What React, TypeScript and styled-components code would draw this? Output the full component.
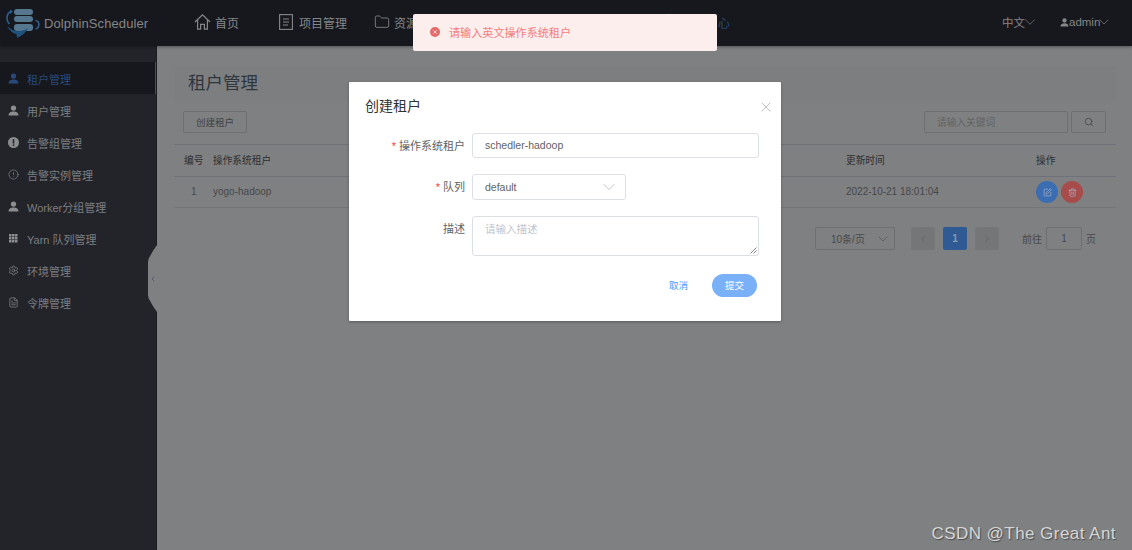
import React from 'react'
import styled, { createGlobalStyle } from 'styled-components'
import { ChevronDown, ChevronLeft, ChevronRight, Search, X, Folder, SquarePen, Trash2, CircleAlert, Settings, FileText } from 'lucide-react'

const GlobalStyle = createGlobalStyle`
  html, body {
    margin: 0;
    height: 100%;
    overflow: hidden;
    background: #7f8081;
    font-family: "Liberation Sans", "Noto Sans CJK SC", sans-serif;
  }
  * { box-sizing: border-box; }
`

const Page = styled.div`
  position: relative;
  width: 1132px;
  height: 550px;
  overflow: hidden;
  display: flex;
  flex-direction: column;
`

const Header = styled.header`
  flex: none;
  height: 46px;
  background: #17181e;
  color: #858687;
  display: flex;
  align-items: center;
  box-shadow: 0 1px 3px rgba(0, 0, 0, 0.35);
  z-index: 1;
`

const Brand = styled.div`
  flex: none;
  width: 194px;
  padding-left: 5px;
  display: flex;
  align-items: center;
  gap: 3px;
  font-size: 13px;
  letter-spacing: 0.1px;
  svg {
    flex: none;
  }
`

const Nav = styled.nav`
  display: flex;
  flex: 1;
  padding-bottom: 2px;
`

const NavItem = styled.div<{ $width: number; $active?: boolean }>`
  flex: none;
  width: ${(p) => p.$width}px;
  display: flex;
  align-items: center;
  gap: 4px;
  font-size: 12px;
  color: ${(p) => (p.$active ? '#284a78' : '#858687')};
`

const HeaderMenu = styled.div<{ $width: number }>`
  flex: none;
  width: ${(p) => p.$width}px;
  display: flex;
  align-items: center;
  font-size: 11.5px;
  padding-bottom: 2px;
`

const MenuChevron = styled(ChevronDown)`
  margin-left: -4px;
`

const Body = styled.div`
  flex: 1;
  display: flex;
  min-height: 0;
`

const Sidebar = styled.aside`
  position: relative;
  flex: none;
  width: 157px;
  padding-top: 16px;
  background: #22242a;
  border-right: 1px solid #1b1c20;
`

const SideItem = styled.div<{ $active?: boolean }>`
  height: 32px;
  padding: 1px 0 0 8px;
  display: flex;
  align-items: center;
  gap: 8px;
  font-size: 11px;
  color: ${(p) => (p.$active ? '#284a78' : '#7d7e80')};
  background: ${(p) => (p.$active ? '#17181e' : 'transparent')};
  border-right: 1px solid ${(p) => (p.$active ? '#2b5290' : 'transparent')};
  svg {
    flex: none;
    color: ${(p) => (p.$active ? '#284a78' : '#8c8d8f')};
  }
`

const CollapseHandle = styled.div`
  position: absolute;
  top: 199px;
  right: -1px;
  width: 9px;
  height: 67px;
  padding-left: 1px;
  background: #7f8081;
  clip-path: polygon(100% 0, 60% 8%, 8% 20%, 0 25%, 0 75%, 8% 80%, 60% 92%, 100% 100%);
  display: flex;
  align-items: center;
  color: #4a5470;
`

const Main = styled.main`
  flex: 1;
  min-width: 0;
  padding: 20px 16px 0 17px;
  background: #7f8081;
`

const TitleBar = styled.div`
  height: 34px;
  padding: 0 0 3px 14px;
  display: flex;
  align-items: center;
  font-size: 17.5px;
  color: #30363d;
  background: #7c7e80;
`

const Toolbar = styled.div`
  margin-top: 11px;
  padding: 0 10px 0 9px;
  height: 22px;
  display: flex;
  align-items: center;
  gap: 3px;
`

const GhostButton = styled.div`
  width: 64px;
  height: 22px;
  border: 1px solid #6d6f72;
  border-radius: 2px;
  display: flex;
  align-items: center;
  justify-content: center;
  font-size: 9.5px;
  color: #3f4144;
  margin-right: auto;
`

const SearchInput = styled.div`
  width: 144px;
  height: 22px;
  padding-left: 12px;
  border: 1px solid #6d6f72;
  border-radius: 2px;
  display: flex;
  align-items: center;
  font-size: 9.7px;
  color: #626365;
`

const SearchButton = styled.div`
  width: 35px;
  height: 22px;
  border: 1px solid #6d6f72;
  border-radius: 2px;
  display: flex;
  align-items: center;
  justify-content: center;
  color: #47494c;
`

const TableWrap = styled.div`
  margin-top: 11px;
  font-size: 10px;
  color: #3a3c3f;
`

const TableRow = styled.div<{ $head?: boolean }>`
  height: 32px;
  padding-bottom: 2px;
  display: grid;
  grid-template-columns: 39px 633px 190px 1fr;
  align-items: center;
  border-top: 1px solid #6f7278;
  font-size: ${(p) => (p.$head ? '9.7px' : '10px')};
  color: ${(p) => (p.$head ? '#2c2e31' : '#46484b')};
  &:last-child {
    border-bottom: 1px solid #737578;
  }
`

const IndexCell = styled.div<{ $head?: boolean }>`
  padding-left: ${(p) => (p.$head ? '10px' : '17px')};
`

const Actions = styled.div`
  display: flex;
  gap: 3px;
  margin-top: 2px;
`

const RoundButton = styled.div<{ $color: string }>`
  width: 22px;
  height: 22px;
  border-radius: 50%;
  background: ${(p) => p.$color};
  display: flex;
  align-items: center;
  justify-content: center;
  color: #a3aebd;
`

const Pager = styled.div`
  margin-top: 19px;
  padding-right: 20px;
  height: 23px;
  display: flex;
  justify-content: flex-end;
  align-items: center;
  font-size: 10px;
  color: #47494c;
`

const PageSize = styled.div`
  width: 80px;
  height: 23px;
  margin-right: 16px;
  padding: 0 3px 0 15px;
  border: 1px solid #6d6f72;
  border-radius: 2px;
  display: flex;
  align-items: center;
  justify-content: space-between;
`

const PageBox = styled.div<{ $active?: boolean }>`
  width: 24px;
  height: 23px;
  margin-right: 8px;
  border-radius: 2px;
  display: flex;
  align-items: center;
  justify-content: center;
  font-weight: bold;
  background: ${(p) => (p.$active ? '#2f5a94' : '#747678')};
  color: ${(p) => (p.$active ? '#8d98a8' : '#5e6062')};
`

const JumpInput = styled.div`
  width: 36px;
  height: 23px;
  margin: 0 4px;
  border: 1px solid #6d6f72;
  border-radius: 2px;
  display: flex;
  align-items: center;
  justify-content: center;
`

const JumpLabel = styled.span<{ $left?: number }>`
  margin-left: ${(p) => p.$left ?? 0}px;
`

const Toast = styled.div`
  position: absolute;
  top: 14px;
  left: 413px;
  width: 304px;
  height: 37px;
  padding: 0 0 2px 17px;
  display: flex;
  align-items: center;
  gap: 9px;
  font-size: 11.1px;
  color: #f37d7d;
  background: #fdeeee;
  border-radius: 2px;
  z-index: 3;
`

const ToastIcon = styled.div`
  width: 10px;
  height: 10px;
  border-radius: 50%;
  background: #e56a6a;
  display: flex;
  align-items: center;
  justify-content: center;
  color: #fdeeee;
`

const Modal = styled.section`
  position: absolute;
  top: 82px;
  left: 349px;
  width: 432px;
  height: 239px;
  padding: 16px 22px 0 16px;
  background: #fff;
  border-radius: 1px;
  box-shadow: 0 1px 3px rgba(0, 0, 0, 0.3);
  z-index: 2;
`

const ModalHead = styled.div`
  height: 17px;
  margin: 0 -15px 18px 0;
  display: flex;
  align-items: center;
  justify-content: space-between;
  font-size: 14px;
  color: #303133;
`

const ModalTitle = styled.span`
  margin-top: -4px;
`

const FormRow = styled.div<{ $mb: number; $top?: boolean }>`
  display: flex;
  align-items: ${(p) => (p.$top ? 'flex-start' : 'center')};
  margin-bottom: ${(p) => p.$mb}px;
`

const Label = styled.label<{ $top?: boolean }>`
  width: 100px;
  margin-right: 7px;
  text-align: right;
  font-size: 11px;
  color: #606266;
  padding-top: ${(p) => (p.$top ? '4px' : '0')};
  padding-bottom: ${(p) => (p.$top ? '0' : '2px')};
`

const Required = styled.span`
  color: #f03c3c;
  margin-right: 3px;
`

const Field = styled.div<{ $width: number; $height: number; $muted?: boolean }>`
  position: relative;
  width: ${(p) => p.$width}px;
  height: ${(p) => p.$height}px;
  padding: 0 6px 1px 12px;
  border: 1px solid #dcdfe6;
  border-radius: 3px;
  display: flex;
  align-items: center;
  justify-content: space-between;
  font-size: 10.5px;
  color: ${(p) => (p.$muted ? '#c0c4cc' : '#606266')};
`

const TextArea = styled(Field)`
  align-items: flex-start;
  padding-top: 4px;
`

const ResizeGrip = styled.svg`
  position: absolute;
  right: 1px;
  bottom: 1px;
`

const ModalFooter = styled.div`
  display: flex;
  justify-content: flex-end;
  align-items: center;
  gap: 24px;
  padding-right: 2px;
`

const TextButton = styled.span`
  font-size: 9.5px;
  color: #409eff;
  padding-bottom: 2px;
`

const SubmitButton = styled.div`
  width: 45px;
  height: 23px;
  padding-bottom: 2px;
  border-radius: 12px;
  background: #79b0f8;
  color: #fff;
  font-size: 9.5px;
  display: flex;
  align-items: center;
  justify-content: center;
`

const Watermark = styled.div`
  position: absolute;
  right: 16px;
  bottom: 6px;
  font-size: 17px;
  letter-spacing: 0.45px;
  color: #d6d6d6;
  text-shadow: 1px 1px 1px #4a4a4a;
  z-index: 4;
`

const Logo = () => (
  <svg width="36" height="40" viewBox="0 3 36 40" fill="none">
    <rect x="9" y="9" width="19" height="6" rx="3" fill="#557890" />
    <rect x="9" y="16" width="19" height="6" rx="3" fill="#557890" />
    <rect x="9" y="24" width="19" height="7" rx="3" fill="#557890" />
    <path d="M6.5 11.5 C1.5 12.5 0.5 20 4.5 24" stroke="#2c5f8e" strokeWidth="1.6" />
    <path d="M5 9.5 L8 11.5 L5 14 Z" fill="#2c5f8e" />
    <path d="M30.5 20.5 C35 21 35 28 30.5 29" stroke="#2c5f8e" strokeWidth="1.6" />
    <path d="M2 26 L6 29 C10 32 17 32 23 28 C20 34 16 36 12 38 L11.5 34 C8 33.5 5 31 2 26 Z" fill="#1f5480" />
  </svg>
)

const HomeIcon = () => (
  <svg width="17" height="18" viewBox="0 0 18 18" fill="none" stroke="currentColor" strokeWidth="1.3">
    <path d="M1 9 L9 1.5 L17 9" />
    <path d="M3.8 7 V16.5 H7 V11.5 H11 V16.5 H14.2 V7" />
  </svg>
)

const ListDocIcon = () => (
  <svg width="16" height="16" viewBox="0 0 16 16" fill="none" stroke="currentColor" strokeWidth="1.1">
    <rect x="0.6" y="0.6" width="12.8" height="14.8" />
    <path d="M4 5 H10 M4 8 H10 M4 11 H9" />
  </svg>
)

const UserIcon = ({ size = 10 }: { size?: number }) => (
  <svg width={size} height={size} viewBox="0 0 10 10" fill="currentColor">
    <circle cx="5" cy="2.8" r="2.4" />
    <path d="M0.5 9.5 C0.5 6.6 2.6 5.8 5 5.8 C7.4 5.8 9.5 6.6 9.5 9.5 Z" />
  </svg>
)

const AlertFilled = () => (
  <svg width="11" height="11" viewBox="0 0 11 11">
    <circle cx="5.5" cy="5.5" r="5.5" fill="currentColor" />
    <rect x="4.7" y="2.2" width="1.6" height="4.4" fill="#22242a" />
    <rect x="4.7" y="7.4" width="1.6" height="1.5" fill="#22242a" />
  </svg>
)

const GridIcon = () => (
  <svg width="11" height="11" viewBox="0 0 11 11" fill="currentColor">
    {[1, 4, 7].map((y) =>
      [1, 4, 7].map((x) => <rect key={`${x}-${y}`} x={x} y={y} width="2.5" height="2.5" />)
    )}
  </svg>
)

const sideItems = [
  { key: 'tenant', title: '租户管理', icon: <UserIcon size={11} />, active: true },
  { key: 'user', title: '用户管理', icon: <UserIcon size={11} /> },
  { key: 'warn', title: '告警组管理', icon: <AlertFilled /> },
  { key: 'instance', title: '告警实例管理', icon: <CircleAlert size={11} strokeWidth={1.4} /> },
  { key: 'worker', title: 'Worker分组管理', icon: <UserIcon size={11} /> },
  { key: 'yarn', title: 'Yarn 队列管理', icon: <GridIcon /> },
  { key: 'env', title: '环境管理', icon: <Settings size={11} strokeWidth={1.5} /> },
  { key: 'token', title: '令牌管理', icon: <FileText size={11} strokeWidth={1.5} /> }
]

const App: React.FC = () => {
  return (
    <Page>
      <GlobalStyle />
      <Header>
        <Brand>
          <Logo />
          <span>DolphinScheduler</span>
        </Brand>
        <Nav>
          <NavItem $width={85}><HomeIcon />首页</NavItem>
          <NavItem $width={95}><ListDocIcon />项目管理</NavItem>
          <NavItem $width={94}><Folder size={16} strokeWidth={1.3} />资源中心</NavItem>
          <NavItem $width={100}><Folder size={16} strokeWidth={1.3} />数据源中心</NavItem>
          <NavItem $width={92}><Folder size={16} strokeWidth={1.3} />监控中心</NavItem>
          <NavItem $width={120} $active><UserIcon size={18} />安全中心</NavItem>
        </Nav>
        <HeaderMenu $width={58}>中文<MenuChevron size={18} strokeWidth={0.9} /></HeaderMenu>
        <HeaderMenu $width={72}><UserIcon size={9} />admin<MenuChevron size={16} strokeWidth={1} /></HeaderMenu>
      </Header>
      <Body>
        <Sidebar>
          {sideItems.map((item) => (
            <SideItem key={item.key} $active={item.active}>
              {item.icon}
              <span>{item.title}</span>
            </SideItem>
          ))}
          <CollapseHandle>
            <ChevronLeft size={8} strokeWidth={2.4} />
          </CollapseHandle>
        </Sidebar>
        <Main>
          <TitleBar>租户管理</TitleBar>
          <Toolbar>
            <GhostButton>创建租户</GhostButton>
            <SearchInput>请输入关键词</SearchInput>
            <SearchButton><Search size={10} /></SearchButton>
          </Toolbar>
          <TableWrap>
            <TableRow $head>
              <IndexCell $head>编号</IndexCell>
              <div>操作系统租户</div>
              <div>更新时间</div>
              <div>操作</div>
            </TableRow>
            <TableRow>
              <IndexCell>1</IndexCell>
              <div>yogo-hadoop</div>
              <div>2022-10-21 18:01:04</div>
              <Actions>
                <RoundButton $color="#3b6db2"><SquarePen size={9} /></RoundButton>
                <RoundButton $color="#a84b4b"><Trash2 size={9} /></RoundButton>
              </Actions>
            </TableRow>
          </TableWrap>
          <Pager>
            <PageSize>10条/页<ChevronDown size={16} strokeWidth={0.9} /></PageSize>
            <PageBox><ChevronLeft size={12} strokeWidth={1.5} /></PageBox>
            <PageBox $active>1</PageBox>
            <PageBox><ChevronRight size={12} strokeWidth={1.5} /></PageBox>
            <JumpLabel $left={15}>前往</JumpLabel>
            <JumpInput>1</JumpInput>
            <JumpLabel>页</JumpLabel>
          </Pager>
        </Main>
      </Body>
      <Toast>
        <ToastIcon><X size={6} strokeWidth={3} /></ToastIcon>
        请输入英文操作系统租户
      </Toast>
      <Modal>
        <ModalHead>
          <ModalTitle>创建租户</ModalTitle>
          <X size={16} strokeWidth={0.9} color="#909399" />
        </ModalHead>
        <FormRow $mb={16}>
          <Label><Required>*</Required>操作系统租户</Label>
          <Field $width={287} $height={25}>schedler-hadoop</Field>
        </FormRow>
        <FormRow $mb={16}>
          <Label><Required>*</Required>队列</Label>
          <Field $width={154} $height={26}>default<ChevronDown size={20} strokeWidth={0.8} color="#a0a4ac" /></Field>
        </FormRow>
        <FormRow $mb={18} $top>
          <Label $top>描述</Label>
          <TextArea $width={287} $height={40} $muted>
            请输入描述
            <ResizeGrip width="7" height="7" viewBox="0 0 7 7" stroke="#666" strokeWidth="0.8">
              <path d="M0.5 6.5 L6.5 0.5 M3.5 6.5 L6.5 3.5" />
            </ResizeGrip>
          </TextArea>
        </FormRow>
        <ModalFooter>
          <TextButton>取消</TextButton>
          <SubmitButton>提交</SubmitButton>
        </ModalFooter>
      </Modal>
      <Watermark>CSDN @The Great Ant</Watermark>
    </Page>
  )
}

export default App
